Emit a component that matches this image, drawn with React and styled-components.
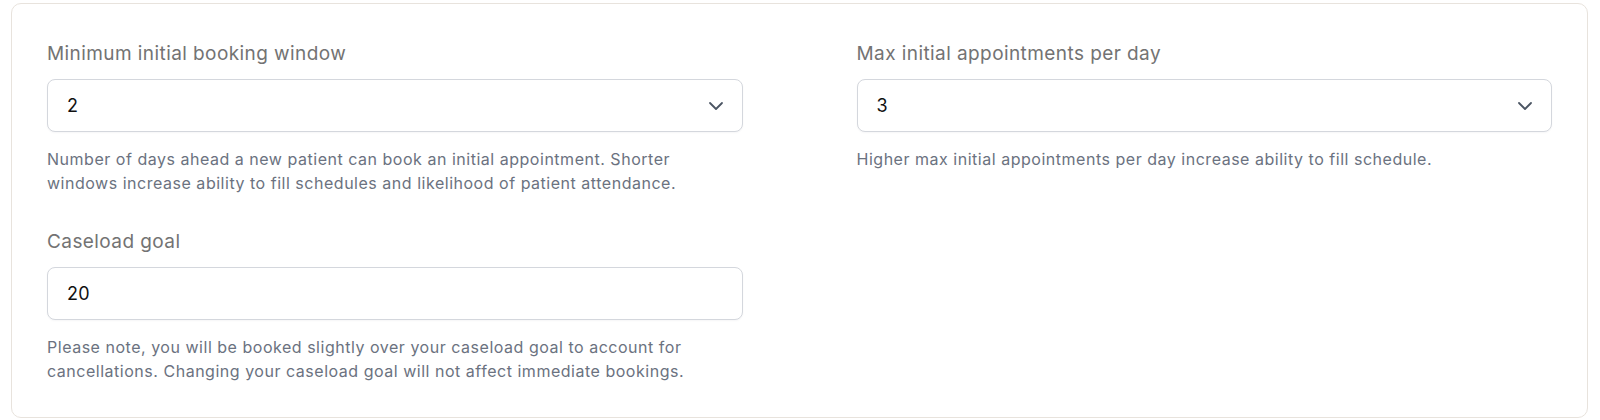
import React from 'react';
import styled, { createGlobalStyle } from 'styled-components';
import { ChevronDown } from 'lucide-react';

const GlobalStyle = createGlobalStyle`
  html, body {
    margin: 0;
    padding: 0;
    background: #ffffff;
    font-family: 'Inter', 'Noto Sans', 'Liberation Sans', sans-serif;
  }
`;

const Page = styled.div`
  padding: 3px 12px 0 11px;
`;

const Card = styled.section`
  border: 1px solid #e8e3dd;
  border-radius: 10px;
  background: #ffffff;
  padding: 36px 35px 34px;
  display: grid;
  grid-template-columns: 1fr 1fr;
  column-gap: 114px;
  row-gap: 33px;
  align-items: start;
`;

const Field = styled.div`
  display: flex;
  flex-direction: column;
`;

const Label = styled.label`
  font-size: 19px;
  line-height: 27px;
  letter-spacing: 0.42px;
  color: #737373;
  margin-bottom: 12px;
`;

const Control = styled.div`
  box-sizing: border-box;
  height: 53px;
  display: flex;
  align-items: center;
  justify-content: space-between;
  padding: 0 14px 0 19px;
  border: 1px solid #d4d7dd;
  border-radius: 8px;
  background: #ffffff;
  box-shadow: 0 1px 2px rgba(16, 24, 40, 0.04);
  font-size: 18px;
  letter-spacing: 0.3px;
  color: #111111;
  cursor: ${props => (props.$select ? 'pointer' : 'text')};

  svg {
    color: #4b5563;
    flex-shrink: 0;
  }
`;

const Help = styled.p`
  margin: 16px 0 0;
  font-size: 16px;
  line-height: 23.5px;
  letter-spacing: 0.52px;
  color: #6b7280;
`;

const fields = [
  {
    label: 'Minimum initial booking window',
    value: '2',
    select: true,
    help: (
      <>
        Number of days ahead a new patient can book an initial appointment. Shorter
        <br />
        windows increase ability to fill schedules and likelihood of patient attendance.
      </>
    ),
  },
  {
    label: 'Max initial appointments per day',
    value: '3',
    select: true,
    help: 'Higher max initial appointments per day increase ability to fill schedule.',
  },
  {
    label: 'Caseload goal',
    value: '20',
    select: false,
    help: (
      <>
        Please note, you will be booked slightly over your caseload goal to account for
        <br />
        cancellations. Changing your caseload goal will not affect immediate bookings.
      </>
    ),
  },
];

const SettingField = ({ label, value, select, help }) => (
  <Field>
    <Label>{label}</Label>
    <Control $select={select}>
      <span>{value}</span>
      {select && <ChevronDown size={24} strokeWidth={1.8} />}
    </Control>
    <Help>{help}</Help>
  </Field>
);

export default function App() {
  return (
    <Page>
      <GlobalStyle />
      <Card>
        {fields.map(f => (
          <SettingField key={f.label} {...f} />
        ))}
      </Card>
    </Page>
  );
}
